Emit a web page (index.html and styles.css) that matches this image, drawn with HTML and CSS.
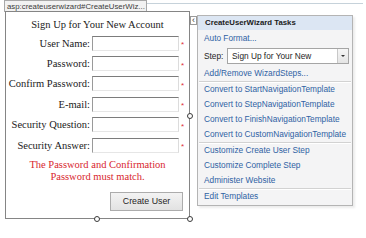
FILE: index.html
```html
<!DOCTYPE html>
<html>
<head>
<meta charset="utf-8">
<link rel="stylesheet" href="styles.css">
</head>
<body>
<div class="surface">
  <div class="tabbar">
    <span class="tab">asp:createuserwizard#CreateUserWiz...</span>
    <span class="rule"></span>
  </div>
  <div class="wizard">
    <div class="title">Sign Up for Your New Account</div>
    <div class="fields">
      <label class="lbl">User Name:</label><span class="input"></span><span class="req">*</span>
      <label class="lbl">Password:</label><span class="input"></span><span class="req">*</span>
      <label class="lbl">Confirm Password:</label><span class="input"></span><span class="req">*</span>
      <label class="lbl">E-mail:</label><span class="input"></span><span class="req">*</span>
      <label class="lbl">Security Question:</label><span class="input"></span><span class="req">*</span>
      <label class="lbl">Security Answer:</label><span class="input"></span><span class="req">*</span>
    </div>
    <div class="error">The Password and Confirmation<br>Password must match.</div>
    <div class="actions"><span class="btn">Create User</span></div>
    <span class="handle h-right"></span>
    <span class="handle h-bottom"></span>
    <span class="handle h-corner"></span>
  </div>

  <span class="collapse">&lsaquo;</span>
  <div class="tasks">
    <div class="tasks-head">CreateUserWizard Tasks</div>
    <div class="group">
      <div class="item link">Auto Format...</div>
      <div class="item step">
        <span class="step-label">Step:</span>
        <span class="select"><span class="select-text">Sign Up for Your New</span><span class="arrow"></span></span>
      </div>
      <div class="item link">Add/Remove WizardSteps...</div>
    </div>
    <div class="group">
      <div class="item link">Convert to StartNavigationTemplate</div>
      <div class="item link">Convert to StepNavigationTemplate</div>
      <div class="item link">Convert to FinishNavigationTemplate</div>
      <div class="item link">Convert to CustomNavigationTemplate</div>
    </div>
    <div class="group">
      <div class="item link">Customize Create User Step</div>
      <div class="item link">Customize Complete Step</div>
      <div class="item link">Administer Website</div>
    </div>
    <div class="group">
      <div class="item link">Edit Templates</div>
    </div>
  </div>
</div>
</body>
</html>
```

FILE: styles.css
```css
html, body {
  margin: 0;
  padding: 0;
  background: #ffffff;
}

.surface {
  position: relative;
  width: 366px;
  height: 238px;
  overflow: hidden;
}

.tabbar {
  display: flex;
  align-items: flex-start;
  height: 11px;
  padding-left: 4px;
}

.tab {
  box-sizing: border-box;
  width: 143px;
  height: 12px;
  padding-left: 2px;
  border: 1px solid #a8a8a8;
  border-bottom: none;
  background: #f2f2f2;
  font-family: "Liberation Sans", sans-serif;
  font-size: 7.8px;
  line-height: 11px;
  color: #3c3c3c;
  white-space: nowrap;
  overflow: hidden;
}

.rule {
  flex: 1;
  margin-top: 3px;
  margin-right: 3px;
  border-top: 1px solid #c6d2da;
}

.wizard {
  position: relative;
  box-sizing: border-box;
  margin-left: 5px;
  width: 185px;
  height: 208px;
  border: 1px solid #858585;
  font-family: "Liberation Serif", serif;
  font-size: 10.5px;
  color: #1a1a1a;
}

.title {
  padding-top: 6px;
  line-height: 14px;
  text-align: center;
}

.fields {
  display: grid;
  grid-template-columns: 84px 87px auto;
  grid-auto-rows: 20.4px;
  column-gap: 2px;
  align-items: center;
  margin-top: 1px;
}

.lbl {
  text-align: right;
  white-space: nowrap;
}

.input {
  box-sizing: border-box;
  height: 15px;
  border: 1px solid;
  border-color: #7c7c7c #dcdcdc #e6e6e6 #9a9a9a;
  background: #ffffff;
}

.req {
  color: #e0303a;
  font-family: "Liberation Sans", sans-serif;
  font-size: 8px;
  line-height: 8px;
  padding-top: 4px;
}

.error {
  margin-top: 4px;
  line-height: 12px;
  text-align: center;
  color: #d8262e;
}

.actions {
  display: flex;
  justify-content: flex-end;
  margin-top: 9px;
  padding-right: 6px;
}

.btn {
  box-sizing: border-box;
  width: 73px;
  height: 19px;
  border: 1px solid #acacac;
  background: linear-gradient(#f3f3f3, #e2e2e2);
  font-family: "Liberation Sans", sans-serif;
  font-size: 8.8px;
  line-height: 17px;
  text-align: center;
  color: #1e1e1e;
}

.handle {
  position: absolute;
  box-sizing: border-box;
  width: 6px;
  height: 6px;
  border: 1px solid #3a3a3a;
  border-radius: 50%;
  background: #ffffff;
}

.h-right { right: -4px; top: 101px; }
.h-bottom { left: 88px; bottom: -4px; }
.h-corner { right: -4px; bottom: -4px; }

.collapse {
  position: absolute;
  left: 190px;
  top: 16px;
  box-sizing: border-box;
  width: 7px;
  height: 9px;
  border: 1px solid #9a9a9a;
  background: #ffffff;
  font-family: "Liberation Sans", sans-serif;
  font-size: 9px;
  line-height: 6px;
  text-align: center;
  color: #333333;
}

.tasks {
  position: absolute;
  left: 197px;
  top: 15px;
  box-sizing: border-box;
  width: 156px;
  height: 191px;
  border: 1px solid #b4b4b4;
  background: #f4f4f5;
  box-shadow: 2px 2px 2px rgba(0, 0, 0, 0.08);
  font-family: "Liberation Sans", sans-serif;
  font-size: 8.3px;
}

.tasks-head {
  height: 14px;
  padding-left: 7px;
  background: #dce6f3;
  font-weight: bold;
  font-size: 7.8px;
  line-height: 14px;
  color: #1b1b1b;
}

.group {
  padding: 1px 0 0;
}

.group + .group {
  border-top: 1px solid #d2d2d2;
  box-shadow: inset 0 1px 0 #ffffff;
  margin: 0 1px;
  padding-top: 0;
}

.item {
  height: 15px;
  line-height: 15px;
  padding-left: 6px;
  white-space: nowrap;
}

.group + .group .item {
  padding-left: 5px;
}

.link {
  color: #2f62a4;
}

.step {
  display: flex;
  align-items: center;
  height: 20px;
  color: #1e1e1e;
}

.step-label {
  width: 23px;
}

.select {
  box-sizing: border-box;
  display: flex;
  align-items: center;
  width: 122px;
  height: 16px;
  border: 1px solid #a5a5a5;
  background: #ffffff;
}

.select-text {
  flex: 1;
  padding-left: 4px;
  line-height: 14px;
  color: #1e1e1e;
}

.arrow {
  position: relative;
  box-sizing: border-box;
  width: 11px;
  height: 14px;
  border-left: 1px solid #c8c8c8;
  background: linear-gradient(#f6f6f6, #e4e4e4);
}

.arrow::after {
  content: "";
  position: absolute;
  left: 3px;
  top: 6px;
  border-left: 2px solid transparent;
  border-right: 2px solid transparent;
  border-top: 2px solid #333333;
}
```
